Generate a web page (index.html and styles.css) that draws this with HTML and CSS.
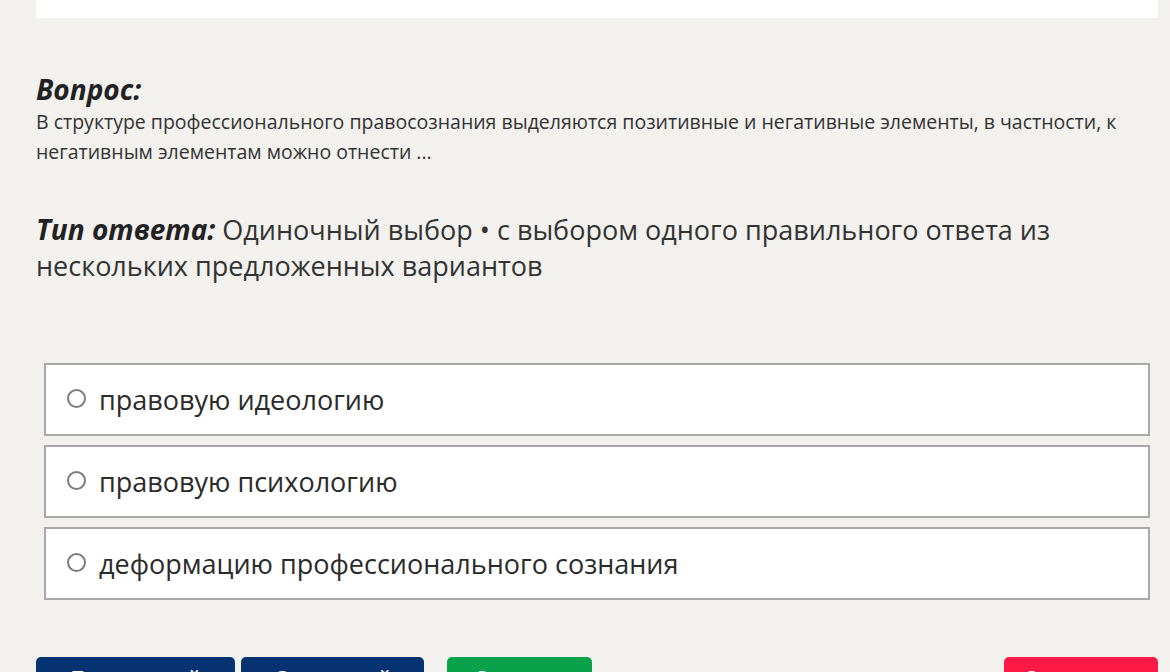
FILE: index.html
```html
<!DOCTYPE html>
<html lang="ru">
<head>
    <meta name="viewport" content="width=device-width, initial-scale=1">
    <link rel="stylesheet" href="styles.css">
</head>
<body>

<div class="page">
    <div class="top-card"></div>

    <div class="question">
        <h2 class="label">Вопрос:</h2>
        <p class="question-text">В структуре профессионального правосознания выделяются позитивные и негативные элементы, в частности, к негативным элементам можно отнести ...</p>
    </div>

    <div class="answer-type">
        <span class="label">Тип ответа:</span> Одиночный выбор • с выбором одного правильного ответа из нескольких предложенных вариантов
    </div>

    <!-- Answer options -->
    <ul class="options">
        <li class="option"><span class="radio"></span>правовую идеологию</li>
        <li class="option"><span class="radio"></span>правовую психологию</li>
        <li class="option"><span class="radio"></span>деформацию профессионального сознания</li>
    </ul>

    <div class="buttons">
        <span class="btn btn-blue btn-prev">Предыдущий</span>
        <span class="btn btn-blue btn-next">Следующий</span>
        <span class="btn btn-green btn-answer">Ответить</span>
        <span class="btn btn-red btn-finish">Завершить</span>
    </div>
</div>

</body>
</html>
```

FILE: styles.css
```css
body {
    margin: 0;
    font-family: 'Open Sans', 'Noto Sans', sans-serif;
    background-color: #f2f1ee;
    color: #2b2b2b;
}

.page {
    padding: 0 12px 0 36px;
}

/* White card cut off at the top */
.top-card {
    height: 18px;
    background: #ffffff;
}

.label {
    font-weight: 700;
    font-style: italic;
    color: #222;
}

.question {
    margin-top: 53px;
}

.question h2 {
    margin: 0;
    font-size: 28px;
    line-height: 36px;
}

.question-text {
    margin: 0;
    font-size: 19.5px;
    line-height: 30px;
    color: #333;
    padding-right: 30px;
}

.answer-type {
    margin-top: 44px;
    font-size: 27px;
    line-height: 36px;
    color: #333;
    padding-right: 80px;
}

.answer-type .label {
    font-size: 28px;
}

/* Options */
.options {
    list-style-type: none;
    margin: 79px 8px 0 8px;
    padding: 0;
}

.option {
    display: flex;
    align-items: center;
    height: 69px;
    margin-bottom: 9px;
    padding-left: 21px;
    background: #ffffff;
    border: 2px solid #a8a8a8;
    font-size: 27px;
    color: #2b2b2b;
}

.radio {
    width: 15px;
    height: 15px;
    border: 2px solid #7d7d7d;
    border-radius: 50%;
    margin-right: 13px;
    margin-top: -2px;
    flex-shrink: 0;
}

/* Buttons */
.buttons {
    display: flex;
    margin-top: 57px;
}

.btn {
    display: block;
    height: 50px;
    padding-top: 7px;
    box-sizing: border-box;
    border-radius: 5px;
    color: #ffffff;
    font-size: 20px;
    line-height: 27px;
    text-align: center;
}

.btn-blue {
    background-color: #063271;
}

.btn-green {
    background-color: #0aa14b;
}

.btn-red {
    background-color: #fe1947;
}

.btn-prev {
    width: 199px;
}

.btn-next {
    width: 183px;
    margin-left: 6px;
}

.btn-answer {
    width: 145px;
    margin-left: 23px;
}

.btn-finish {
    width: 154px;
    margin-left: auto;
}
```
